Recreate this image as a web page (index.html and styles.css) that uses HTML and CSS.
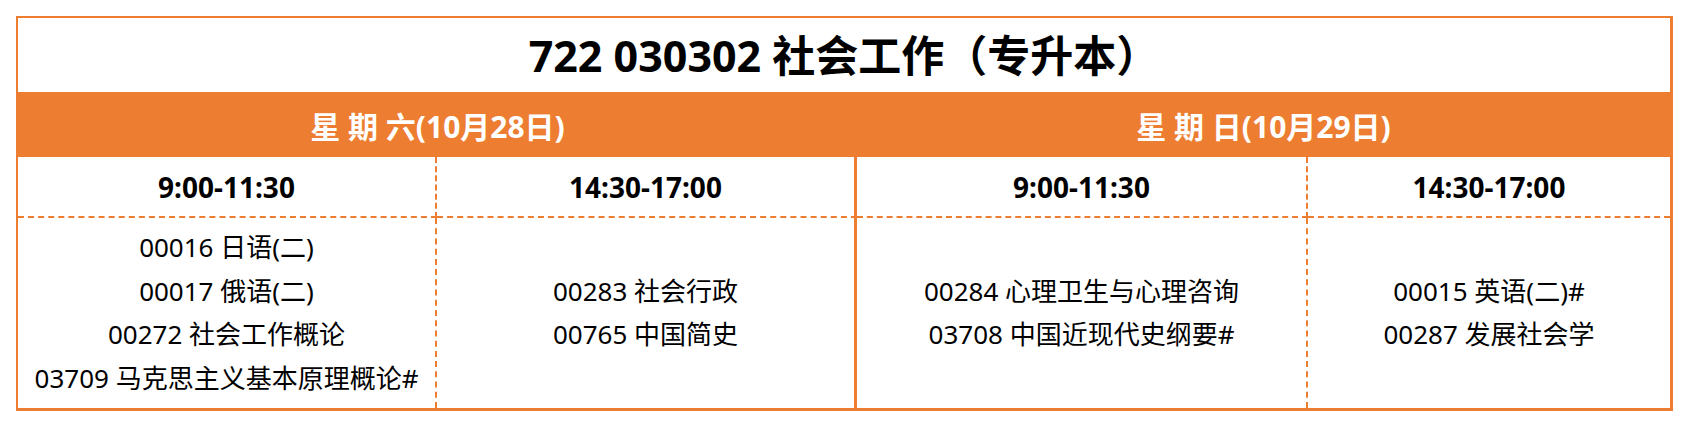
FILE: index.html
```html
<!DOCTYPE html>
<html lang="zh-CN">
<head>
<meta charset="utf-8">
<title>722 030302 社会工作（专升本）</title>
<link rel="stylesheet" href="styles.css">
</head>
<body>
<div class="sheet">
  <div class="title">722 030302 社会工作（专升本）</div>
  <div class="day">星 期 六(10月28日)</div>
  <div class="day">星 期 日(10月29日)</div>
  <div class="time c1">9:00-11:30</div>
  <div class="time c2">14:30-17:00</div>
  <div class="time c3">9:00-11:30</div>
  <div class="time c4">14:30-17:00</div>
  <div class="cell c1">
    <div>00016 日语(二)</div>
    <div>00017 俄语(二)</div>
    <div>00272 社会工作概论</div>
    <div>03709 马克思主义基本原理概论#</div>
  </div>
  <div class="cell c2">
    <div>00283 社会行政</div>
    <div>00765 中国简史</div>
  </div>
  <div class="cell c3">
    <div>00284 心理卫生与心理咨询</div>
    <div>03708 中国近现代史纲要#</div>
  </div>
  <div class="cell c4">
    <div>00015 英语(二)#</div>
    <div>00287 发展社会学</div>
  </div>
</div>
</body>
</html>
```

FILE: styles.css
```css
html, body {
  margin: 0;
  padding: 0;
  background: #ffffff;
}
body {
  padding: 16px 0 0 16px;
  font-family: "Noto Sans", "Noto Sans CJK SC", sans-serif;
  color: #000000;
}
.sheet {
  width: 1652px;
  display: grid;
  grid-template-columns: 419px 420px 451px 362px;
  grid-template-rows: 74px 65px 61px 190px;
  border-top: 2px solid #ED7D31;
  border-left: 2px solid #ED7D31;
  border-right: 3px solid #ED7D31;
  border-bottom: 3px solid #ED7D31;
  box-sizing: content-box;
}
.title {
  grid-column: 1 / -1;
  display: flex;
  align-items: center;
  justify-content: center;
  font-size: 43px;
  font-weight: 700;
  padding-bottom: 4px;
}
.day {
  grid-column: span 2;
  background: #ED7D31;
  color: #ffffff;
  display: flex;
  align-items: center;
  justify-content: center;
  font-size: 30px;
  font-weight: 700;
}
.time {
  display: flex;
  align-items: center;
  justify-content: center;
  font-size: 28px;
  font-weight: 700;
  border-bottom: 2px dashed #ED7D31;
}
.cell {
  display: flex;
  flex-direction: column;
  align-items: center;
  justify-content: center;
  font-size: 26px;
  line-height: 43.5px;
}
.c1 { border-right: 2px dashed #ED7D31; }
.c2 { border-right: 3px solid #ED7D31; }
.c3 { border-right: 2px dashed #ED7D31; }
.title, .time, .cell { box-sizing: border-box; }
```
